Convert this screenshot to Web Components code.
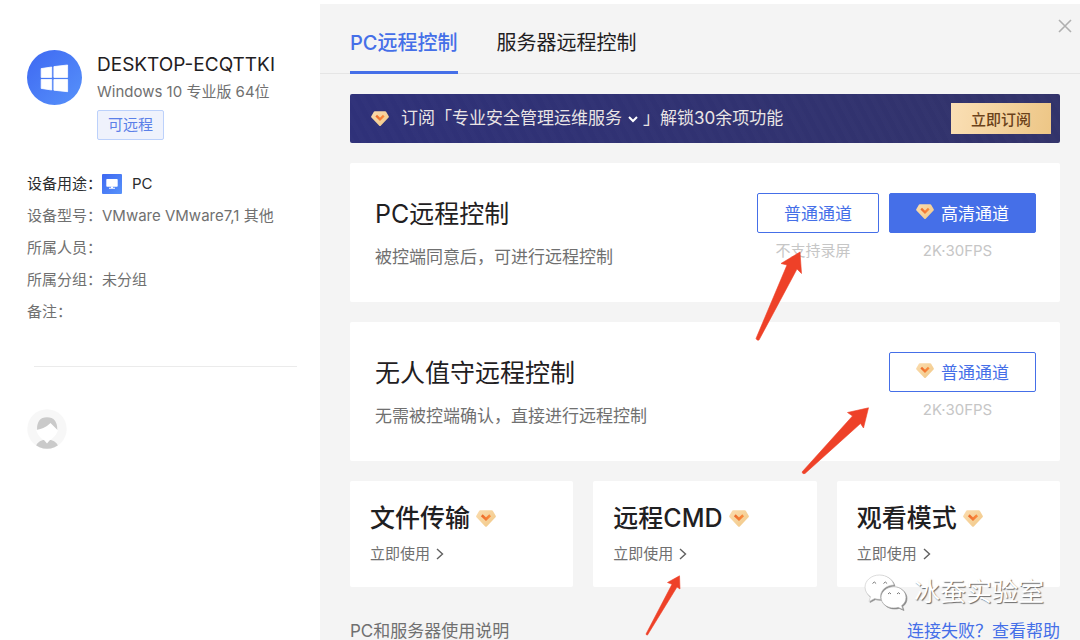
<!DOCTYPE html>
<html lang="zh-CN">
<head>
<meta charset="utf-8">
<meta name="viewport" content="width=device-width, initial-scale=1">
<title>PC远程控制</title>
<style>
  body {
    margin: 0;
    background: #fff;
    color: #1f2022;
    font-family: Inter, "Noto Sans CJK SC", sans-serif;
    font-size: 15px;
    --blue: #456fe8;
    --muted: #707070;
    --panel: #f4f4f4;
  }
</style>
</head>
<body>
<remote-app></remote-app>

<script>
const define = (name, html, setup) => {
  const template = document.createElement('template');
  template.innerHTML = html;
  customElements.define(name, class extends HTMLElement {
    constructor() {
      super();
      this.attachShadow({ mode: 'open' }).append(template.content.cloneNode(true));
    }
    connectedCallback() {
      if (setup) setup(this, this.shadowRoot);
    }
  });
};

/* Membership gem */
define('vip-gem', `
  <style>
    :host { display: inline-flex; flex: none; width: 18px; }
    svg { width: 100%; display: block; }
  </style>
  <svg viewBox="0 0 20 17" aria-hidden="true">
    <defs>
      <linearGradient id="g" x1="0" y1="0" x2="1" y2="1"><stop offset="0" stop-color="#fbdcae"/><stop offset="1" stop-color="#f1c887"/></linearGradient>
      <linearGradient id="v" x1="0" y1="0" x2="1" y2="0"><stop offset="0" stop-color="#ec6b2c"/><stop offset="1" stop-color="#fb8b3c"/></linearGradient>
    </defs>
    <path d="M4.2 .3h11.6q.6 0 1 .5l2.9 5q.4.8-.2 1.5l-8.7 9.1q-.8.8-1.6 0L.5 7.3q-.6-.7-.2-1.5l2.9-5q.4-.5 1-.5z" fill="url(#g)"/>
    <path d="M5.8 5.2L10 9.2l4.2-4" fill="none" stroke="url(#v)" stroke-width="2.6"/>
  </svg>`);

/* Hand-drawn style pointer arrows */
define('pointer-arrow', `
  <style>
    :host { display: block; position: absolute; z-index: 2; pointer-events: none; }
    svg { display: block; overflow: visible; }
  </style>
  <svg aria-hidden="true"><path fill="#ee4128" stroke="#ee4128" stroke-width=".6" stroke-linejoin="round"/></svg>`,
  (host, root) => {
    const svg = root.querySelector('svg');
    svg.setAttribute('width', host.getAttribute('w'));
    svg.setAttribute('height', host.getAttribute('h'));
    svg.firstElementChild.setAttribute('d', host.getAttribute('d'));
  });

define('device-sidebar', `
  <style>
    :host { display: block; padding: 50px 23px 20px 27px; box-sizing: border-box; }
    .device { display: flex; gap: 15px; }
    .logo { flex: none; width: 55px; height: 55px; }
    h1 { margin: 0; font-size: 19px; line-height: 30px; font-weight: 400; white-space: nowrap; }
    .os { margin: 0; line-height: 24px; color: var(--muted); white-space: nowrap; }
    .badge { display: inline-block; box-sizing: border-box; margin-top: 6px; padding: 0 10px; border: 1px solid #bcd1fb;
      border-radius: 2px; background: #eff2fc; color: #5b80e8; line-height: 28px; }
    dl { margin: 28px 0 38px; color: var(--muted); line-height: 32px; }
    dl div { display: flex; align-items: center; min-height: 32px; }
    dl .main { color: #2b2c2e; }
    dd { margin: 0; display: flex; align-items: center; gap: 10px; }
    hr { margin: 0 0 42px 7px; border: 0; height: 1px; background: #ebebeb; }
    .user { display: block; width: 40px; height: 40px; }
  </style>
  <header class="device">
    <svg class="logo" viewBox="0 0 55 55" role="img" aria-label="Windows">
      <defs><linearGradient id="b" x1="0" y1="0" x2="1" y2="1"><stop offset="0" stop-color="#3e68f2"/><stop offset="1" stop-color="#5792fa"/></linearGradient></defs>
      <circle cx="27.5" cy="27.5" r="27.5" fill="url(#b)"/>
      <path fill="#fff" stroke="#fff" stroke-width=".8" stroke-linejoin="round" d="M14.2 18.6L24.7 17v10.4H14.2zM26.9 16.6L40.6 15v12.4H26.9zM14.2 29.5h10.5V40L14.2 38.4zM26.9 29.5h13.7v12.2L26.9 40.2z"/>
    </svg>
    <div>
      <h1>DESKTOP-ECQTTKI</h1>
      <p class="os">Windows 10 专业版 64位</p>
      <span class="badge">可远程</span>
    </div>
  </header>
  <dl>
    <div class="main"><dt>设备用途：</dt><dd>
      <svg width="20" height="20" viewBox="0 0 20 20" aria-hidden="true">
        <defs><linearGradient id="p" x1="0" y1="0" x2="1" y2="1"><stop offset="0" stop-color="#3e68f2"/><stop offset="1" stop-color="#5792fa"/></linearGradient></defs>
        <rect width="20" height="20" rx="1" fill="url(#p)"/>
        <rect x="4.3" y="5" width="11.4" height="7.8" rx=".8" fill="#fff"/>
        <path d="M9 12.5h2v1.2h2v1H7v-1h2z" fill="#fff"/>
      </svg>PC</dd></div>
    <div><dt>设备型号：</dt><dd>VMware VMware7,1 其他</dd></div>
    <div><dt>所属人员：</dt><dd></dd></div>
    <div><dt>所属分组：</dt><dd>未分组</dd></div>
    <div><dt>备注：</dt><dd></dd></div>
  </dl>
  <hr>
  <svg class="user" viewBox="0 0 40 40" role="img" aria-label="用户头像">
    <defs><clipPath id="c"><circle cx="20" cy="20" r="19.7"/></clipPath></defs>
    <circle cx="20" cy="20" r="19.7" fill="#f7f7f7"/>
    <g clip-path="url(#c)">
      <path d="M8 40Q9 33 16 31h8q7 2 8 9z" fill="#cacaca"/>
      <path d="M10 21.500Q9.500 8.200 20 8.200T30.300 21.500z" fill="#cacaca"/>
      <path d="M9.200 21Q18 19.500 23.500 14L31 21.500Q28.500 28 22.500 31.500L20 34.500l-2.500-3Q11 28 9.200 21z" fill="#fff"/>
    </g>
  </svg>`);

define('tab-bar', `
  <style>
    :host { display: flex; align-items: flex-start; justify-content: space-between; padding: 0 8px 0 30px; box-shadow: inset 0 -1px #e5e5e5; }
    nav { display: flex; gap: 39px; }
    button { border: 0; background: none; font: inherit; color: inherit; padding: 0; cursor: pointer; }
    .tab { padding: 24px 0 13px; border-bottom: 3px solid transparent; font-size: 20px; line-height: 30px; white-space: nowrap; }
    .tab[aria-selected="true"] { color: var(--blue); font-weight: 500; border-color: var(--blue); }
    .close { display: block; margin-top: 15px; }
    .close svg { display: block; }
  </style>
  <nav role="tablist">
    <button class="tab" role="tab" aria-selected="true">PC远程控制</button>
    <button class="tab" role="tab" aria-selected="false">服务器远程控制</button>
  </nav>
  <button class="close" aria-label="关闭"><svg width="14" height="14" viewBox="0 0 14 14"><path d="M1 1l12 12M13 1L1 13" stroke="#b0b0b0" stroke-width="1.600" fill="none"/></svg></button>`);

define('subscribe-banner', `
  <style>
    :host { display: flex; align-items: center; gap: 12px; padding: 9px 9px 9px 21px; border-radius: 2px; color: #e9e4e4;
      background: repeating-linear-gradient(62deg, #ffffff03 0 4px, transparent 6px 10px), linear-gradient(90deg, #2f3179, #32336a); }
    p { margin: 0; flex: 1; font-size: 17px; line-height: 31px; white-space: nowrap; }
    .more { display: inline-block; vertical-align: middle; margin: 0 5px 0 6px; }
    button { border: 0; width: 100px; height: 31px; padding: 0; font: inherit; font-weight: 500; color: #6b421a;
      background: linear-gradient(100deg, #fadfb5, #edc686); cursor: pointer; }
  </style>
  <vip-gem></vip-gem>
  <p>订阅「专业安全管理运维服务<svg class="more" width="10" height="7" viewBox="0 0 10 7" aria-hidden="true"><path d="M1 1l4 4 4-4" fill="none" stroke="#fff" stroke-width="2"/></svg>」解锁30余项功能</p>
  <button>立即订阅</button>`);

/* A channel button with its caption */
define('channel-button', `
  <style>
    :host { display: flex; flex-direction: column; min-width: 122px; }
    :host([vip]) { min-width: 147px; }
    button { display: flex; align-items: center; justify-content: center; gap: 7px; height: 40px; box-sizing: border-box;
      border: 1px solid var(--blue); border-radius: 2px; background: #fff; color: var(--blue); padding: 0 0 2px;
      font: inherit; font-size: 17px; cursor: pointer; }
    :host([primary]) button { background: var(--blue); color: #fff; }
    vip-gem { display: none; }
    :host([vip]) vip-gem { display: inline-flex; }
    small { margin-top: 7px; padding-right: 10px; font-size: 15px; line-height: 22px; text-align: center; color: #c6c6c6; }
  </style>
  <button><vip-gem></vip-gem><slot></slot></button>
  <small><slot name="caption"></slot></small>`);

define('mode-card', `
  <style>
    :host { display: flex; justify-content: space-between; position: relative; padding: 30px 24px 33px 25px; background: #fff; border-radius: 2px; }
    .text { padding-top: 4px; }
    h2 { margin: 0 0 14px; font-size: 25px; line-height: 34px; font-weight: 400; }
    p { margin: 0; font-size: 17px; line-height: 24px; color: var(--muted); }
    .actions { display: flex; gap: 10px; align-items: flex-start; }
  </style>
  <div class="text"><h2><slot name="title"></slot></h2><p><slot name="desc"></slot></p></div>
  <div class="actions"><slot></slot></div>
  <slot name="mark"></slot>`);

define('tool-card', `
  <style>
    :host { display: block; position: relative; padding: 22px 20px; background: #fff; border-radius: 2px; }
    h3 { display: flex; align-items: center; gap: 6px; margin: 0 0 10px; font-size: 25px; line-height: 30px; font-weight: 500; white-space: nowrap; }
    vip-gem { width: 20px; }
    a { display: inline-flex; align-items: center; gap: 6px; line-height: 22px; color: var(--muted); text-decoration: none; }
  </style>
  <h3><slot></slot><vip-gem></vip-gem></h3>
  <a href="#">立即使用<svg width="8" height="12" viewBox="0 0 8 12" aria-hidden="true"><path d="M1 1l5.500 5L1 11" fill="none" stroke="#606060" stroke-width="1.400"/></svg></a>
  <slot name="mark"></slot>`);

define('source-watermark', `
  <style>
    :host { display: flex; align-items: center; gap: 7px; color: #fff; font-size: 26px; line-height: 36px; white-space: nowrap;
      text-shadow: 1px 1px 1px #6a6a6a; pointer-events: none; }
    svg { display: block; filter: drop-shadow(1px 1px 0 #8a8a8a); }
  </style>
  <svg width="43" height="36" viewBox="0 0 43 36" aria-hidden="true">
    <path d="M15.500 1C7.500 1 1 6.400 1 13.200c0 3.900 2.200 7.300 5.500 9.500L5 27.500l5.600-2.900c1.600.5 3.200.7 4.900.7h1.500c-.3-1-.5-2-.5-3 0-6.300 6-11.300 13.400-11.300C28.700 5.400 22.700 1 15.500 1z" fill="#fff" stroke="#c4c4c4" stroke-width=".6"/>
    <path d="M42 23.400c0-5.900-5.500-10.700-12.200-10.700s-12.800 4.800-12.800 10.700S22.700 34 29.800 34c1.500 0 3-.2 4.400-.6l4.800 2.200-1.300-4c2.900-2 4.300-4.900 4.300-8.200z" fill="#fff" stroke="#999" stroke-width=".6"/>
    <path d="M8.500 9.500q1.800-3 3.600 0M19.500 9.500q1.800-3 3.600 0M24 20q1.500-2.600 3 0M33 20q1.500-2.600 3 0" fill="none" stroke="#777" stroke-width="1"/>
  </svg>
  <span>冰蚕实验室</span>`);

define('remote-app', `
  <style>
    :host { display: grid; grid-template-columns: 320px minmax(0, 1fr); padding-top: 4px; min-height: 100vh; box-sizing: border-box; }
    device-sidebar { margin-top: -4px; }
    main { position: relative; background: var(--panel); }
    .body { display: grid; gap: 20px; padding: 20px 20px 0 30px; }
    .tools { display: grid; grid-template-columns: repeat(3, minmax(0, 1fr)); gap: 20px; }
    footer { display: flex; justify-content: space-between; margin-top: 15px; font-size: 17px; line-height: 18px; color: var(--muted); }
    footer a { color: var(--blue); text-decoration: none; }
    .arrow-record { right: 258px; top: 88px; }
    .arrow-channel { right: 191px; top: 85px; }
    .arrow-cmd { left: 52px; top: 94px; }
    source-watermark { position: absolute; right: 36px; bottom: 30px; z-index: 1; }
  </style>
  <device-sidebar></device-sidebar>
  <main>
    <tab-bar></tab-bar>
    <div class="body">
      <subscribe-banner></subscribe-banner>
      <mode-card>
        <span slot="title">PC远程控制</span>
        <span slot="desc">被控端同意后，可进行远程控制</span>
        <channel-button>普通通道<span slot="caption">不支持录屏</span></channel-button>
        <channel-button vip primary>高清通道<span slot="caption">2K·30FPS</span></channel-button>
        <pointer-arrow slot="mark" class="arrow-record" w="47" h="90" d="M45 1L26 12.500 32 14 1 87.500Q2 90 4 89L42 18 46.500 22.500z"></pointer-arrow>
      </mode-card>
      <mode-card>
        <span slot="title">无人值守远程控制</span>
        <span slot="desc">无需被控端确认，直接进行远程控制</span>
        <channel-button vip>普通通道<span slot="caption">2K·30FPS</span></channel-button>
        <pointer-arrow slot="mark" class="arrow-channel" w="68" h="68" d="M67.500 .8L46.500 5.500 51.500 9 1 65Q1.500 67.500 4 66.500L59.500 16.500 62.500 21z"></pointer-arrow>
      </mode-card>
      <div class="tools">
        <tool-card>文件传输</tool-card>
        <tool-card>远程CMD<pointer-arrow slot="mark" class="arrow-cmd" w="36" h="61" d="M34.500 .8L22.500 7.500 27 9.300 1 59Q1.500 60.500 2.500 60L32 12 35 14z"></pointer-arrow></tool-card>
        <tool-card>观看模式</tool-card>
      </div>
      <footer><span>PC和服务器使用说明</span><a href="#">连接失败？查看帮助</a></footer>
    </div>
    <source-watermark></source-watermark>
  </main>`);
</script>
</body>
</html>
